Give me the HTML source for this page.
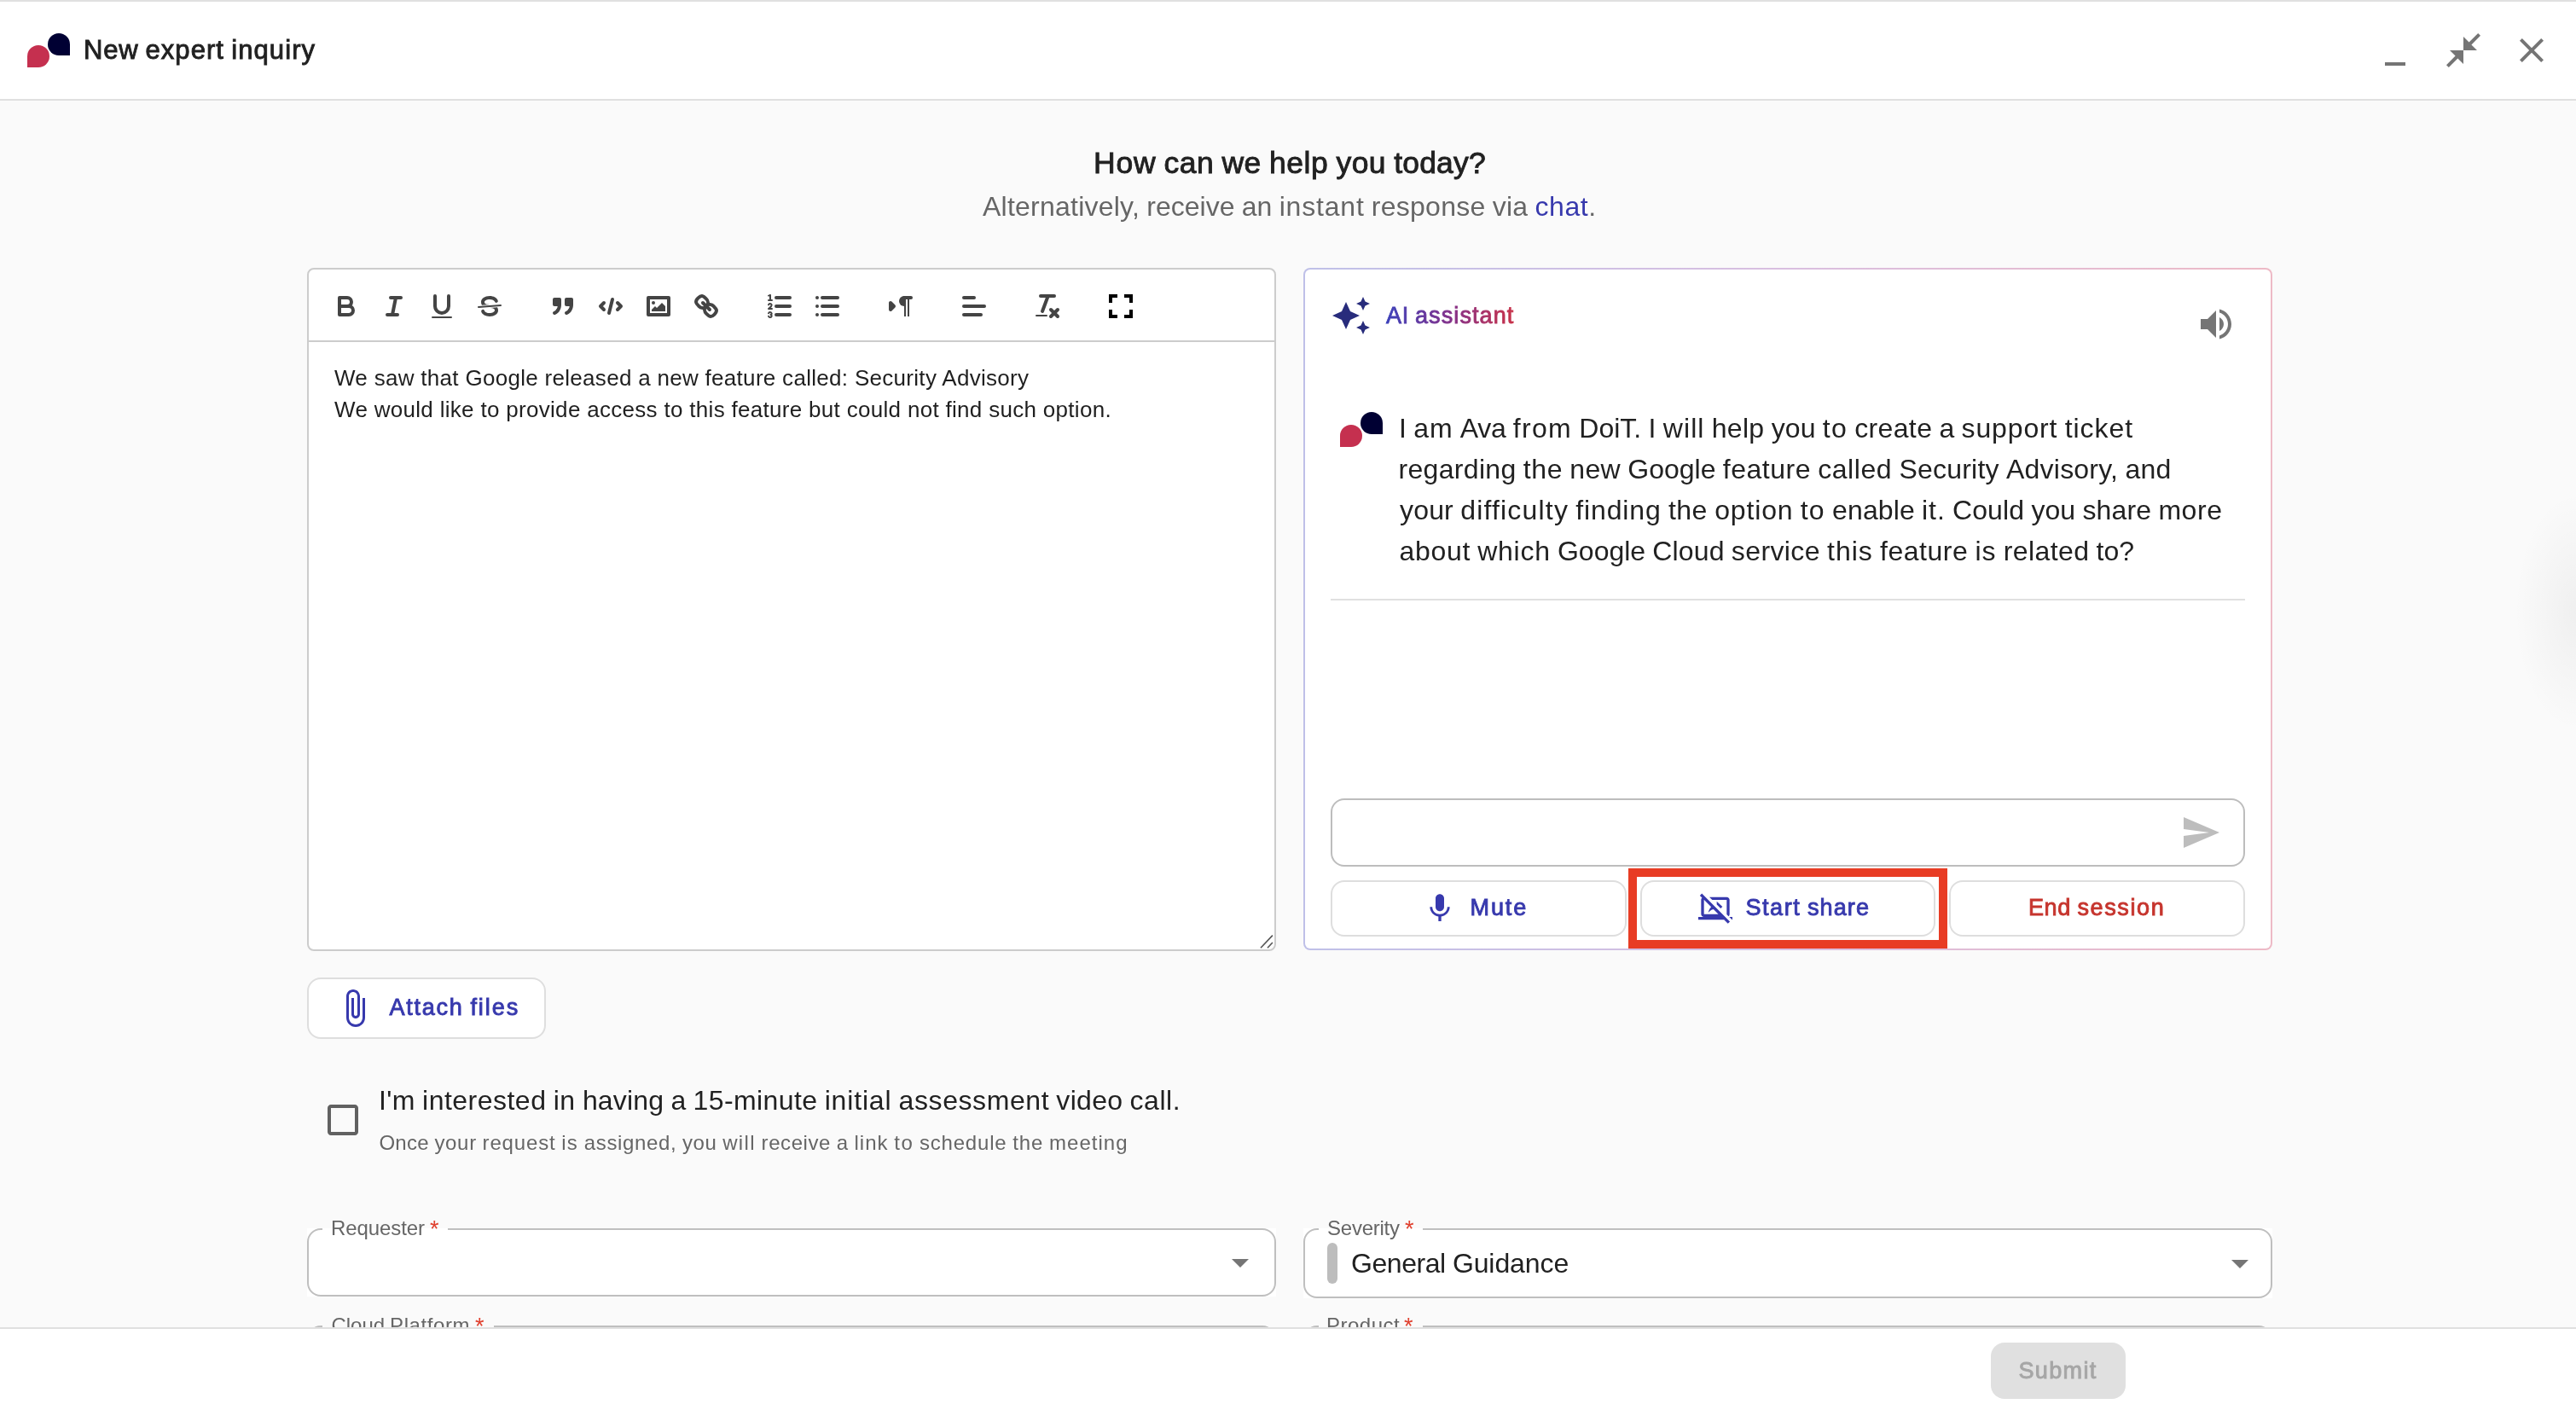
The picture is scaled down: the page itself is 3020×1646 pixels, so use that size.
<!DOCTYPE html>
<html lang="en">
<head>
<meta charset="utf-8">
<title>New expert inquiry</title>
<style>
html,body{margin:0;padding:0;}
body{width:3020px;height:1646px;overflow:hidden;position:relative;background:#fafafa;font-family:"Liberation Sans",sans-serif;color:#212121;}
.abs{position:absolute;}
.t{position:absolute;white-space:nowrap;line-height:1;margin:0;padding:0;will-change:transform;}
.w{position:absolute;top:0;}
.med{-webkit-text-stroke:0.9px currentColor;}
svg{position:absolute;overflow:visible;}
.ql-stroke{fill:none;stroke:#444;stroke-linecap:round;stroke-linejoin:round;stroke-width:2;}
.ql-fill{fill:#444;}
.ql-thin{stroke-width:1;}
.ql-even{fill-rule:evenodd;}
.ql-sf{fill:#444;stroke:#444;stroke-linecap:round;stroke-linejoin:round;stroke-width:2;}
#topstrip{left:0;top:0;width:3020px;height:2px;background:#e0e0e0;}
#header{left:0;top:2px;width:3020px;height:114px;background:#fff;border-bottom:2px solid #e0e0e0;}
#footer{left:0;top:1556px;width:3020px;height:90px;background:#fff;border-top:2px solid #e0e0e0;box-sizing:border-box;}
.logo-r{background:#c5304f;border-radius:50% 50% 50% 0;}
.logo-n{background:#000033;border-radius:50% 50% 0 50%;}
#editor{left:360px;top:314px;width:1136px;height:801px;box-sizing:border-box;border:2px solid #ccc;border-radius:8px;background:#fff;}
#tbline{left:362px;top:399px;width:1132px;height:2px;background:#ccc;}
#aipanel{left:1528px;top:314px;width:1136px;height:800px;box-sizing:border-box;border-radius:8px;background:linear-gradient(90deg,#bfc0e8 0%,#d9bfe0 50%,#edbac6 100%);}
#aipanel .inner{position:absolute;left:2px;top:2px;right:2px;bottom:2px;background:#fff;border-radius:6px;}
.btn{position:absolute;box-sizing:border-box;border:2px solid #dedede;border-radius:16px;background:#fff;}
.field{position:absolute;box-sizing:border-box;border:2px solid #bfbfbf;border-radius:16px;background:#fff;}
.ast{color:#e0412f;}
.notch{position:absolute;height:4px;background:#fafafa;}
</style>
</head>
<body>
<div class="abs" id="topstrip"></div>
<div class="abs" id="header"></div>

<!-- header logo -->
<div class="abs logo-r" style="left:32px;top:53px;width:26px;height:26px;"></div>
<div class="abs logo-n" style="left:56px;top:39px;width:26px;height:26px;"></div>
<div class="t med" id="title" style="left:0px;top:42.89px;font-size:31.02px;"><span class="w" style="left:98.00px;letter-spacing:0.755px">New</span><span class="w" style="left:170.48px;letter-spacing:1.055px">expert</span><span class="w" style="left:271.19px;letter-spacing:1.085px">inquiry</span></div>

<!-- header icons -->
<svg style="left:2784px;top:35px;" width="48" height="48" viewBox="0 0 24 24"><path fill="#757575" d="M6 19h12v2H6z"/></svg>
<svg style="left:2864px;top:35px;" width="48" height="48" viewBox="0 0 24 24"><path fill="#757575" d="M22 3.41 16.71 8.7 20 12h-8V4l3.29 3.29L20.59 2 22 3.41zM3.41 22l5.29-5.29L12 20v-8H4l3.29 3.29L2 20.59 3.41 22z"/></svg>
<svg style="left:2944px;top:35px;" width="48" height="48" viewBox="0 0 24 24"><path fill="#757575" d="M19 6.41 17.59 5 12 10.59 6.41 5 5 6.41 10.59 12 5 17.59 6.41 19 12 13.41 17.59 19 19 17.59 13.41 12z"/></svg>

<!-- heading -->
<div class="t med" id="h1" style="left:0px;top:174.10px;font-size:35.5px;"><span class="w" style="left:1282.00px;letter-spacing:0.755px">How</span><span class="w" style="left:1364.42px;letter-spacing:0.536px">can</span><span class="w" style="left:1432.41px;letter-spacing:0.516px">we</span><span class="w" style="left:1487.95px;letter-spacing:0.598px">help</span><span class="w" style="left:1566.59px;letter-spacing:0.396px">you</span><span class="w" style="left:1634.16px;letter-spacing:0.198px">today?</span></div>
<div class="t" id="sub" style="left:0px;top:225.81px;font-size:32px;color:#666;"><span class="w" style="left:1152.00px;letter-spacing:0.232px">Alternatively,</span><span class="w" style="left:1344.27px;letter-spacing:0.020px">receive</span><span class="w" style="left:1455.77px;letter-spacing:0.031px">an</span><span class="w" style="left:1499.64px;letter-spacing:0.815px">instant</span><span class="w" style="left:1607.83px;letter-spacing:0.258px">response</span><span class="w" style="left:1749.73px;letter-spacing:0.214px">via</span><span class="w" style="left:1799.50px;letter-spacing:0.550px"><span style="color:#3739ad">chat</span>.</span></div>

<!-- editor -->
<div class="abs" id="editor"></div>
<div class="abs" id="tbline"></div>
<!-- toolbar icons -->
<svg style="left:388px;top:341px;" width="36" height="36" viewBox="0 0 18 18"><path class="ql-stroke" d="M5,4H9.5A2.5,2.5,0,0,1,12,6.5v0A2.5,2.5,0,0,1,9.5,9H5A0,0,0,0,1,5,9V4A0,0,0,0,1,5,4Z"/><path class="ql-stroke" d="M5,9h5.5A2.5,2.5,0,0,1,13,11.5v0A2.5,2.5,0,0,1,10.5,14H5a0,0,0,0,1,0,0V9A0,0,0,0,1,5,9Z"/></svg>
<svg style="left:444px;top:341px;" width="36" height="36" viewBox="0 0 18 18"><line class="ql-stroke" x1="7" x2="13" y1="4" y2="4"/><line class="ql-stroke" x1="5" x2="11" y1="14" y2="14"/><line class="ql-stroke" x1="8" x2="10" y1="14" y2="4"/></svg>
<svg style="left:500px;top:341px;" width="36" height="36" viewBox="0 0 18 18"><path class="ql-stroke" d="M5,3V9a4.012,4.012,0,0,0,4,4H9a4.012,4.012,0,0,0,4-4V3"/><rect class="ql-fill" height="1" rx="0.5" ry="0.5" width="12" x="3" y="15"/></svg>
<svg style="left:556px;top:341px;" width="36" height="36" viewBox="0 0 18 18"><line class="ql-stroke ql-thin" x1="15.5" x2="2.5" y1="8.5" y2="9.5"/><path class="ql-fill" d="M9.007,8C6.542,7.791,6,7.519,6,6.5,6,5.792,7.283,5,9,5c1.571,0,2.765.679,2.969,1.309a1,1,0,0,0,1.9-.617C13.356,4.106,11.354,3,9,3,6.2,3,4,4.538,4,6.5a3.2,3.2,0,0,0,.5,1.843Z"/><path class="ql-fill" d="M8.984,10C11.457,10.208,12,10.479,12,11.5c0,0.708-1.283,1.5-3,1.5-1.571,0-2.765-.679-2.969-1.309a1,1,0,1,0-1.9.617C4.644,13.894,6.646,15,9,15c2.8,0,5-1.538,5-3.5a3.2,3.2,0,0,0-.5-1.843Z"/></svg>
<svg style="left:642px;top:341px;" width="36" height="36" viewBox="0 0 18 18"><rect class="ql-sf" height="3" width="3" x="4" y="5"/><rect class="ql-sf" height="3" width="3" x="11" y="5"/><path class="ql-sf ql-even" d="M7,8c0,4.031-3,5-3,5"/><path class="ql-sf ql-even" d="M14,8c0,4.031-3,5-3,5"/></svg>
<svg style="left:698px;top:341px;" width="36" height="36" viewBox="0 0 18 18"><polyline class="ql-even ql-stroke" points="5 7 3 9 5 11"/><polyline class="ql-even ql-stroke" points="13 7 15 9 13 11"/><line class="ql-stroke" x1="10" x2="8" y1="5" y2="13"/></svg>
<svg style="left:754px;top:341px;" width="36" height="36" viewBox="0 0 18 18"><rect class="ql-stroke" height="10" width="12" x="3" y="4"/><circle class="ql-fill" cx="6" cy="7" r="1"/><polyline class="ql-even ql-fill" points="5 12 5 11 7 9 8 10 11 7 13 9 13 12 5 12"/></svg>
<svg style="left:810px;top:341px;" width="36" height="36" viewBox="0 0 18 18"><line class="ql-stroke" x1="7" x2="11" y1="7" y2="11"/><path class="ql-even ql-stroke" d="M8.9,4.577a3.476,3.476,0,0,1,.36,4.679A3.476,3.476,0,0,1,4.577,8.9C3.185,7.5,2.035,6.4,4.217,4.217S7.5,3.185,8.9,4.577Z"/><path class="ql-even ql-stroke" d="M13.423,9.1a3.476,3.476,0,0,0-4.679-.36,3.476,3.476,0,0,0,.36,4.679c1.392,1.392,2.5,2.542,4.679.36S14.815,10.5,13.423,9.1Z"/></svg>
<svg style="left:896px;top:341px;" width="36" height="36" viewBox="0 0 18 18"><line class="ql-stroke" x1="7" x2="15" y1="4" y2="4"/><line class="ql-stroke" x1="7" x2="15" y1="9" y2="9"/><line class="ql-stroke" x1="7" x2="15" y1="14" y2="14"/><line class="ql-stroke ql-thin" x1="2.5" x2="4.5" y1="5.5" y2="5.5"/><path class="ql-fill" d="M3.5,6A0.5,0.5,0,0,1,3,5.5V3.085l-0.276.138A0.5,0.5,0,0,1,2.053,3c-0.124-.247-0.023-0.324.224-0.447l1-.5A0.5,0.5,0,0,1,4,2.5v3A0.5,0.5,0,0,1,3.5,6Z"/><path class="ql-stroke ql-thin" d="M4.5,10.5h-2c0-.234,1.85-1.076,1.85-2.234A0.959,0.959,0,0,0,2.5,8.156"/><path class="ql-stroke ql-thin" d="M2.5,14.846a0.959,0.959,0,0,0,1.85-.109A0.7,0.7,0,0,0,3.75,14a0.688,0.688,0,0,0,.6-0.736,0.959,0.959,0,0,0-1.85-.109"/></svg>
<svg style="left:952px;top:341px;" width="36" height="36" viewBox="0 0 18 18"><line class="ql-stroke" x1="6" x2="15" y1="4" y2="4"/><line class="ql-stroke" x1="6" x2="15" y1="9" y2="9"/><line class="ql-stroke" x1="6" x2="15" y1="14" y2="14"/><line class="ql-stroke" x1="3" x2="3" y1="4" y2="4"/><line class="ql-stroke" x1="3" x2="3" y1="9" y2="9"/><line class="ql-stroke" x1="3" x2="3" y1="14" y2="14"/></svg>
<svg style="left:1038px;top:341px;" width="36" height="36" viewBox="0 0 18 18"><polygon class="ql-sf" points="3 11 5 9 3 7 3 11"/><line class="ql-sf" x1="15" x2="11" y1="4" y2="4"/><path class="ql-fill" d="M11,3a3,3,0,0,0,0,6h1V3H11Z"/><rect class="ql-fill" height="11" width="1" x="11" y="4"/><rect class="ql-fill" height="11" width="1" x="13" y="4"/></svg>
<svg style="left:1124px;top:341px;" width="36" height="36" viewBox="0 0 18 18"><line class="ql-stroke" x1="3" x2="15" y1="9" y2="9"/><line class="ql-stroke" x1="3" x2="13" y1="14" y2="14"/><line class="ql-stroke" x1="3" x2="9" y1="4" y2="4"/></svg>
<svg style="left:1210px;top:341px;" width="36" height="36" viewBox="0 0 18 18"><line class="ql-stroke" x1="5" x2="13" y1="3" y2="3"/><line class="ql-stroke" x1="6" x2="9.35" y1="12" y2="3"/><line class="ql-stroke" x1="11" x2="15" y1="11" y2="15"/><line class="ql-stroke" x1="15" x2="11" y1="11" y2="15"/><rect class="ql-fill" height="1" rx="0.5" ry="0.5" width="7" x="2" y="14"/></svg>
<svg style="left:1290px;top:335px;" width="48" height="48" viewBox="0 0 24 24"><path fill="#000" d="M7 14H5v5h5v-2H7v-3zm-2-4h2V7h3V5H5v5zm12 7h-3v2h5v-5h-2v3zM14 5v2h3v3h2V5h-5z"/></svg>
<div class="t" id="ed1" style="left:392.16px;top:429.99px;font-size:26px;color:#1f1f1f;letter-spacing:0.298px;">We saw that Google released a new feature called: Security Advisory</div>
<div class="t" id="ed2" style="left:392.16px;top:466.99px;font-size:26px;color:#1f1f1f;letter-spacing:0.305px;">We would like to provide access to this feature but could not find such option.</div>

<svg style="left:1470px;top:1090px;" width="30" height="30" viewBox="0 0 30 30"><path d="M8 21.2L21.900 6.600M16 21.200L21.900 15" stroke="#555" stroke-width="1.6" fill="none"/></svg>
<!-- AI panel -->
<div class="abs" id="aipanel"><div class="inner"></div></div>
<svg style="left:1560px;top:346px;" width="48" height="48" viewBox="0 0 24 24"><path fill="#282c7c" d="m19 9 1.25-2.750L23 5l-2.750-1.250L19 1l-1.250 2.750L15 5l2.750 1.250L19 9zm-7.500.500L9 4 6.500 9.500 1 12l5.500 2.500L9 20l2.500-5.500L17 12l-5.500-2.500zM19 15l-1.250 2.750L15 19l2.750 1.250L19 23l1.250-2.750L23 19l-2.750-1.250L19 15z"/></svg>
<svg id="aititle" style="left:1620px;top:350px;will-change:transform;" width="170" height="40" viewBox="0 0 170 40"><defs><linearGradient id="aigrad" gradientUnits="userSpaceOnUse" x1="4" y1="0" x2="156" y2="0"><stop offset="0" stop-color="#3a40ba"/><stop offset="0.5" stop-color="#83308a"/><stop offset="1" stop-color="#c93248"/></linearGradient></defs><text x="5.00" y="29.2" font-family="Liberation Sans, sans-serif" font-size="27.05" fill="url(#aigrad)" stroke="url(#aigrad)" stroke-width="0.8" style="letter-spacing:0.656px">AI</text><text x="39.00" y="29.2" font-family="Liberation Sans, sans-serif" font-size="27.05" fill="url(#aigrad)" stroke="url(#aigrad)" stroke-width="0.8" style="letter-spacing:1.076px">assistant</text></svg>
<svg style="left:2574px;top:356px;" width="48" height="48" viewBox="0 0 24 24"><path fill="#757575" d="M3 9v6h4l5 5V4L7 9H3zm13.500 3c0-1.770-1.020-3.290-2.500-4.030v8.050c1.480-.730 2.500-2.250 2.500-4.020zM14 3.230v2.060c2.890.860 5 3.540 5 6.710s-2.110 5.850-5 6.710v2.060c4.010-.910 7-4.490 7-8.770s-2.990-7.860-7-8.770z"/></svg>
<div class="abs logo-r" style="left:1571px;top:497.500px;width:26px;height:26px;"></div>
<div class="abs logo-n" style="left:1595px;top:482.700px;width:26px;height:26px;"></div>
<div class="t" id="m1" style="left:0px;top:485.91px;font-size:32px;"><span class="w" style="left:1640.00px;letter-spacing:0.156px">I</span><span class="w" style="left:1657.31px;letter-spacing:0.852px">am</span><span class="w" style="left:1711.72px;letter-spacing:-0.255px">Ava</span><span class="w" style="left:1773.77px;letter-spacing:1.332px">from</span><span class="w" style="left:1851.36px;letter-spacing:-0.013px">DoiT.</span><span class="w" style="left:1932.47px;letter-spacing:0.156px">I</span><span class="w" style="left:1949.78px;letter-spacing:1.078px">will</span><span class="w" style="left:2006.78px;letter-spacing:0.301px">help</span><span class="w" style="left:2076.75px;letter-spacing:0.073px">you</span><span class="w" style="left:2136.83px;letter-spacing:1.203px">to</span><span class="w" style="left:2174.17px;letter-spacing:0.367px">create</span><span class="w" style="left:2273.58px;letter-spacing:-0.047px">a</span><span class="w" style="left:2299.59px;letter-spacing:0.866px">support</span><span class="w" style="left:2420.66px;letter-spacing:0.948px">ticket</span></div>
<div class="t" id="m2" style="left:0px;top:533.91px;font-size:32px;"><span class="w" style="left:1639.50px;letter-spacing:0.321px">regarding</span><span class="w" style="left:1785.86px;letter-spacing:0.552px">the</span><span class="w" style="left:1840.27px;letter-spacing:0.354px">new</span><span class="w" style="left:1908.31px;letter-spacing:-0.008px">Google</span><span class="w" style="left:2019.72px;letter-spacing:0.516px">feature</span><span class="w" style="left:2131.23px;letter-spacing:0.542px">called</span><span class="w" style="left:2226.38px;letter-spacing:0.229px">Security</span><span class="w" style="left:2352.08px;letter-spacing:0.203px">Advisory,</span><span class="w" style="left:2491.39px;letter-spacing:0.271px">and</span></div>
<div class="t" id="m3" style="left:0px;top:581.91px;font-size:32px;"><span class="w" style="left:1641.00px;letter-spacing:0.172px">your</span><span class="w" style="left:1712.19px;letter-spacing:1.188px">difficulty</span><span class="w" style="left:1847.33px;letter-spacing:0.862px">finding</span><span class="w" style="left:1955.89px;letter-spacing:0.526px">the</span><span class="w" style="left:2010.19px;letter-spacing:0.859px">option</span><span class="w" style="left:2110.78px;letter-spacing:1.195px">to</span><span class="w" style="left:2148.09px;letter-spacing:0.107px">enable</span><span class="w" style="left:2253.06px;letter-spacing:0.927px">it.</span><span class="w" style="left:2288.98px;letter-spacing:0.116px">Could</span><span class="w" style="left:2381.41px;letter-spacing:0.062px">you</span><span class="w" style="left:2441.44px;letter-spacing:0.131px">share</span><span class="w" style="left:2530.38px;letter-spacing:0.559px">more</span></div>
<div class="t" id="m4" style="left:0px;top:629.91px;font-size:32px;"><span class="w" style="left:1640.50px;letter-spacing:0.672px">about</span><span class="w" style="left:1732.20px;letter-spacing:0.744px">which</span><span class="w" style="left:1826.00px;letter-spacing:-0.021px">Google</span><span class="w" style="left:1937.33px;letter-spacing:0.128px">Cloud</span><span class="w" style="left:2029.84px;letter-spacing:0.377px">service</span><span class="w" style="left:2142.09px;letter-spacing:0.992px">this</span><span class="w" style="left:2204.12px;letter-spacing:0.502px">feature</span><span class="w" style="left:2315.52px;letter-spacing:0.945px">is</span><span class="w" style="left:2348.78px;letter-spacing:0.388px">related</span><span class="w" style="left:2457.61px;letter-spacing:0.026px">to?</span></div>
<div class="abs" style="left:1560px;top:702px;width:1072px;height:2px;background:#e0e0e0;"></div>
<div class="abs" id="aiinput" style="left:1560px;top:936px;width:1072px;height:80px;box-sizing:border-box;border:2px solid #bdbdbd;border-radius:16px;background:#fff;"></div>
<svg style="left:2556px;top:952px;" width="48" height="48" viewBox="0 0 24 24"><path fill="#bdbdbd" d="M2.010 21 23 12 2.010 3 2 10l15 2-15 2z"/></svg>
<div class="btn" style="left:1560px;top:1032px;width:347px;height:66px;"></div>
<div class="btn" style="left:1923px;top:1032px;width:346px;height:66px;"></div>
<div class="btn" style="left:2285px;top:1032px;width:347px;height:66px;"></div>
<svg style="left:1668px;top:1045px;" width="40" height="40" viewBox="0 0 24 24"><path fill="#3739ad" d="M12 14c1.660 0 2.990-1.340 2.990-3L15 5c0-1.660-1.340-3-3-3S9 3.340 9 5v6c0 1.660 1.340 3 3 3zm5.300-3c0 3-2.540 5.100-5.300 5.100S6.700 14 6.700 11H5c0 3.410 2.720 6.230 6 6.720V21h2v-3.280c3.280-.480 6-3.300 6-6.720h-1.700z"/></svg>
<div class="t med" id="mute" style="left:0px;top:1050.65px;font-size:27.05px;color:#3739ad;"><span class="w" style="left:1723.50px;letter-spacing:1.895px">Mute</span></div>
<svg style="left:1991px;top:1045px;" width="40" height="40" viewBox="0 0 24 24"><path fill="#3739ad" d="M21.790 18l2 2H24v-2h-2.210zM1.110 2.980l1.550 1.560c-.41.370-.66.890-.66 1.480V16c0 1.100.9 2 2.010 2H0v2h18.130l2.710 2.710 1.410-1.410L2.520 1.570 1.110 2.980zM4 6.020h.13l4.950 4.930C7.940 12.070 7.310 13.520 7 15c.96-1.290 2.130-2.080 3.670-2.460l3.460 3.480H4v-10zm16 0v10.190l1.300 1.300c.42-.37.7-.89.700-1.490v-10c0-1.110-.9-2-2-2H7.800l2 2H20zm-7.070 3.130l2.790 2.780 1.280-1.200L13 7v2.130l-.7.020z"/></svg>
<div class="t med" id="share" style="left:0px;top:1050.65px;font-size:27.05px;color:#3739ad;"><span class="w" style="left:2046.50px;letter-spacing:1.531px">Start</span><span class="w" style="left:2118.92px;letter-spacing:1.109px">share</span></div>
<div class="t med" id="endsess" style="left:0px;top:1050.65px;font-size:27.05px;color:#c6352e;"><span class="w" style="left:2378.00px;letter-spacing:0.536px">End</span><span class="w" style="left:2435.53px;letter-spacing:1.585px">session</span></div>
<div class="abs" id="redbox" style="left:1909px;top:1018px;width:374px;height:94px;box-sizing:border-box;border:10px solid #e83c24;"></div>

<!-- attach files -->
<div class="btn" style="left:360px;top:1146px;width:280px;height:72px;"></div>
<svg style="left:392px;top:1158px;" width="48" height="48" viewBox="0 0 24 24"><path fill="#3739ad" d="M16.500 6v11.500c0 2.210-1.790 4-4 4s-4-1.790-4-4V5c0-1.380 1.120-2.500 2.500-2.500s2.500 1.120 2.500 2.500v10.500c0 .550-.450 1-1 1s-1-.450-1-1V6H10v9.500c0 1.380 1.120 2.500 2.500 2.500s2.500-1.120 2.500-2.500V5c0-2.210-1.790-4-4-4S7 2.790 7 5v12.500c0 3.040 2.460 5.500 5.500 5.500s5.500-2.460 5.500-5.500V6h-1.500z"/></svg>
<div class="t med" id="attach" style="left:0px;top:1167.55px;font-size:27.05px;color:#3739ad;"><span class="w" style="left:456.50px;letter-spacing:1.747px">Attach</span><span class="w" style="left:551.42px;letter-spacing:1.913px">files</span></div>

<!-- checkbox -->
<svg style="left:378px;top:1289px;" width="48" height="48" viewBox="0 0 24 24"><path fill="#616161" d="M19 5v14H5V5h14m0-2H5c-1.100 0-2 .900-2 2v14c0 1.100.900 2 2 2h14c1.100 0 2-.900 2-2V5c0-1.100-.900-2-2-2z"/></svg>
<div class="t" id="cb1" style="left:0px;top:1273.71px;font-size:32px;"><span class="w" style="left:444.00px;letter-spacing:0.422px">I&#x27;m</span><span class="w" style="left:495.12px;letter-spacing:0.477px">interested</span><span class="w" style="left:648.64px;letter-spacing:0.570px">in</span><span class="w" style="left:682.89px;letter-spacing:0.195px">having</span><span class="w" style="left:786.56px;letter-spacing:-0.078px">a</span><span class="w" style="left:812.48px;letter-spacing:0.413px">15-minute</span><span class="w" style="left:966.70px;letter-spacing:0.826px">initial</span><span class="w" style="left:1053.62px;letter-spacing:0.577px">assessment</span><span class="w" style="left:1238.33px;letter-spacing:0.300px">video</span><span class="w" style="left:1324.55px;letter-spacing:0.541px">call.</span></div>
<div class="t" id="cb2" style="left:0px;top:1328.48px;font-size:24px;color:#666;"><span class="w" style="left:444.50px;letter-spacing:0.207px">Once</span><span class="w" style="left:509.42px;letter-spacing:0.676px">your</span><span class="w" style="left:565.55px;letter-spacing:0.846px">request</span><span class="w" style="left:658.25px;letter-spacing:1.234px">is</span><span class="w" style="left:684.78px;letter-spacing:0.635px">assigned,</span><span class="w" style="left:799.97px;letter-spacing:0.589px">you</span><span class="w" style="left:847.17px;letter-spacing:1.344px">will</span><span class="w" style="left:892.59px;letter-spacing:0.585px">receive</span><span class="w" style="left:980.80px;letter-spacing:0.484px">a</span><span class="w" style="left:1001.38px;letter-spacing:1.059px">link</span><span class="w" style="left:1048.34px;letter-spacing:1.438px">to</span><span class="w" style="left:1077.95px;letter-spacing:0.807px">schedule</span><span class="w" style="left:1187.20px;letter-spacing:0.932px">the</span><span class="w" style="left:1230.09px;letter-spacing:1.007px">meeting</span></div>

<!-- fields row 2 (clipped by footer) -->
<div class="field" style="left:360px;top:1554px;width:1136px;height:80px;"></div>
<div class="field" style="left:1528px;top:1554px;width:1136px;height:80px;"></div>
<div class="abs" style="left:378px;top:1552px;width:201px;height:6px;background:#fafafa;"></div>
<div class="abs" style="left:1546px;top:1552px;width:122px;height:6px;background:#fafafa;"></div>
<div class="t" id="lcloud" style="left:0px;top:1542.28px;font-size:24px;color:#666;"><span class="w" style="left:388.50px;letter-spacing:-0.044px">Cloud</span><span class="w" style="left:457.05px;letter-spacing:0.584px">Platform</span></div><div class="t ast" id="lcloud_a" style="left:557.0px;top:1542.28px;font-size:27px;">*</div>
<div class="t" id="lprod" style="left:0px;top:1542.28px;font-size:24px;color:#666;"><span class="w" style="left:1555.00px;letter-spacing:0.504px">Product</span></div><div class="t ast" id="lprod_a" style="left:1646.0px;top:1542.28px;font-size:27px;">*</div>

<!-- fields row 1 -->
<div class="abs" style="left:360px;top:1440px;width:1136px;height:80px;background:#fff;"></div>
<div class="field" style="left:360px;top:1440px;width:1136px;height:80px;background:transparent;"></div>
<div class="abs" style="left:378px;top:1440px;width:147px;height:2px;background:#fff;"></div>
<div class="t" id="lreq" style="left:0px;top:1428.48px;font-size:24px;color:#666;"><span class="w" style="left:388.00px;letter-spacing:-0.092px">Requester</span></div><div class="t ast" id="lreq_a" style="left:504.0px;top:1428.48px;font-size:27px;">*</div>
<svg style="left:1430px;top:1456px;" width="48" height="48" viewBox="0 0 24 24"><path fill="#757575" d="M7 10l5 5 5-5z"/></svg>

<div class="abs" style="left:1528px;top:1440px;width:1136px;height:82px;background:#fff;"></div>
<div class="field" style="left:1528px;top:1440px;width:1136px;height:82px;background:transparent;"></div>
<div class="abs" style="left:1546px;top:1440px;width:122px;height:2px;background:#fff;"></div>
<div class="t" id="lsev" style="left:0px;top:1428.48px;font-size:24px;color:#666;"><span class="w" style="left:1556.00px;letter-spacing:-0.240px">Severity</span></div><div class="t ast" id="lsev_a" style="left:1647.0px;top:1428.48px;font-size:27px;">*</div>
<div class="abs" style="left:1556px;top:1457px;width:12px;height:48px;border-radius:6px;background:#bdbdbd;"></div>
<div class="t" id="gg" style="left:0px;top:1464.71px;font-size:32px;"><span class="w" style="left:1584.00px;letter-spacing:-0.451px">General</span><span class="w" style="left:1702.88px;letter-spacing:-0.096px">Guidance</span></div>
<svg style="left:2602px;top:1457px;" width="48" height="48" viewBox="0 0 24 24"><path fill="#757575" d="M7 10l5 5 5-5z"/></svg>

<!-- footer -->
<div class="abs" id="footer"></div>
<div class="abs" id="submit" style="left:2334px;top:1574px;width:158px;height:66px;border-radius:16px;background:#e0e0e0;"></div>
<div class="t med" id="submittxt" style="left:0px;top:1593.65px;font-size:27.05px;color:#a6a6a6;"><span class="w" style="left:2366.50px;letter-spacing:1.323px">Submit</span></div>
<div class="abs" style="left:2940px;top:572px;width:80px;height:290px;background:radial-gradient(ellipse 72px 140px at 100% 50%,rgba(0,0,0,0.045),rgba(0,0,0,0) 100%);"></div>
</body>
</html>
